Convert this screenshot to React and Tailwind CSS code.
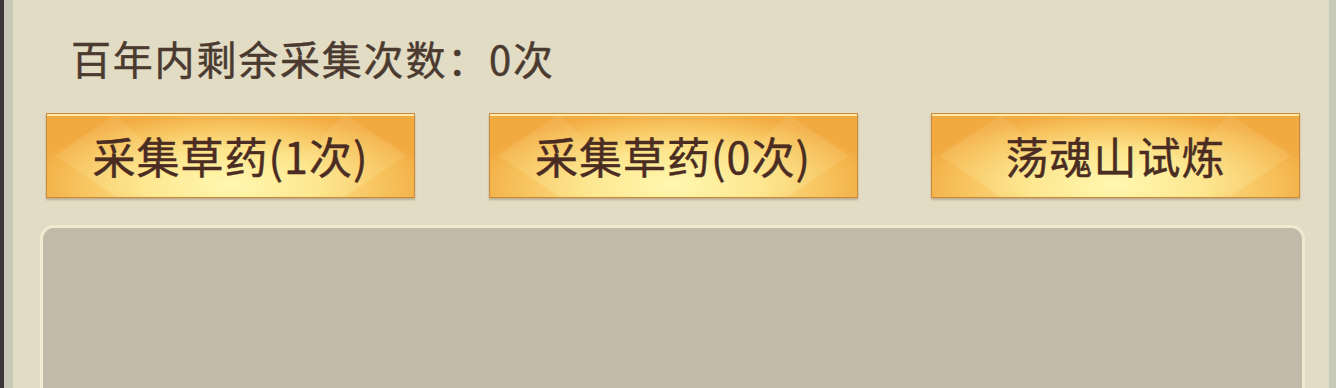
import React from "react";

const font = { fontFamily: '"Noto Sans CJK SC", "Noto Sans", sans-serif' };

// faint diamond facets on the gold buttons
const Facets = () => (
  <svg
    className="absolute inset-0 h-full w-full pointer-events-none"
    viewBox="0 0 369 84"
    preserveAspectRatio="none"
  >
    <polygon points="0,0 70,0 8,42 0,42" fill="#f0a83a" opacity="0.2" />
    <polygon points="0,84 70,84 8,42 0,42" fill="#f4b048" opacity="0.18" />
    <polygon points="8,42 70,0 110,42 70,84" fill="#fff2b0" opacity="0.12" />
    <polygon points="369,0 299,0 361,42 369,42" fill="#f0a83a" opacity="0.2" />
    <polygon points="369,84 299,84 361,42 369,42" fill="#f4b048" opacity="0.18" />
    <polygon points="361,42 299,0 259,42 299,84" fill="#fff2b0" opacity="0.12" />
  </svg>
);

const GoldButton = ({ label }) => (
  <button
    className="relative flex h-[85px] w-[369px] items-center justify-center border border-[#c98a3c] bg-[radial-gradient(ellipse_55%_90%_at_50%_85%,#fff8b0_0%,#fde68e_45%,#f7c25c_80%,#f2aa42_100%)] shadow-[0_2px_2px_rgba(120,90,50,0.35)]"
  >
    <Facets />
    <span className="absolute inset-x-0 top-0 h-[2px] bg-[#fde9a8]" />
    <span
      className="relative text-[43px] font-normal leading-none tracking-[1px] text-[#4a2c22] [-webkit-text-stroke:0.45px_#4a2c22]"
      style={font}
    >
      {label}
    </span>
  </button>
);

export default function App() {
  return (
    <div className="flex h-[388px] w-[1336px] overflow-hidden bg-[#e3dcc4]">
      <div className="w-[4px] bg-[#3b3739]" />
      <div className="w-[9px] bg-[#c6c8b8]" />
      <div className="flex flex-1 flex-col bg-[#e3dcc4]">
        <div
          className="mt-[34px] pl-[58px] text-[40px] font-normal leading-[48px] tracking-[1.8px] text-[#4a3a30] [-webkit-text-stroke:0.45px_#4a3a30]"
          style={font}
        >
          百年内剩余采集次数：0次
        </div>
        <div className="mt-[31px] flex justify-between pl-[33px] pr-[29px]">
          <GoldButton label="采集草药(1次)" />
          <GoldButton label="采集草药(0次)" />
          <GoldButton label="荡魂山试炼" />
        </div>
        <div className="ml-[27px] mr-[24px] mt-[27px] flex-1 rounded-t-[14px] border-[3px] border-b-0 border-[#f1e9d2] bg-[#c1baa8]" />
      </div>
      <div className="w-[7px] bg-[#c8cab8]" />
    </div>
  );
}
